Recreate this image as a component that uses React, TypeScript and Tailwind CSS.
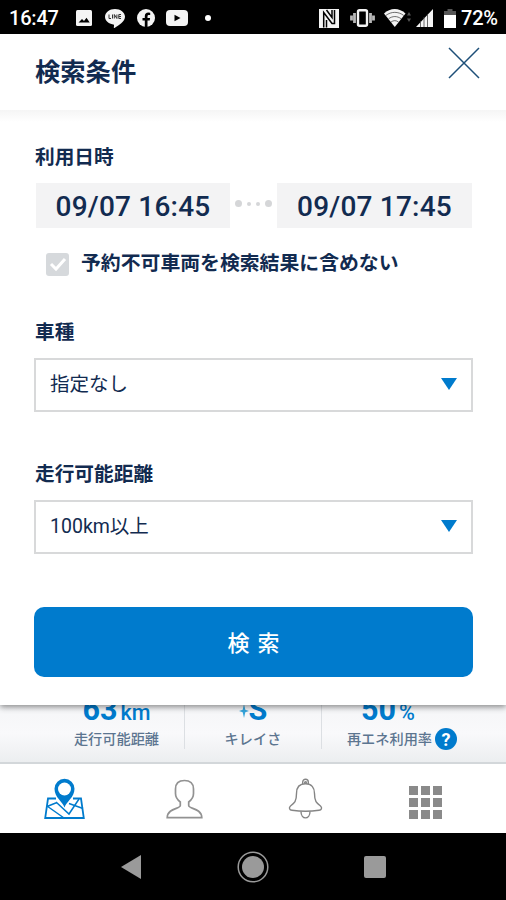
import type { ReactNode } from "react";

const stats = [
  {
    label: "走行可能距離",
    value: "63",
    unit: "km",
    className: "w-[185px] border-r pl-[49px]",
    help: false,
  },
  {
    label: "キレイさ",
    value: "S",
    unit: "",
    className: "w-[137px] border-r",
    help: false,
  },
  {
    label: "再エネ利用率",
    value: "50",
    unit: "%",
    className: "w-[184px] pr-[24px]",
    help: true,
  },
];

function StatusBar() {
  return (
    <div className="flex h-[34px] shrink-0 items-center bg-black pt-0.5 pl-[9px] text-[20px] font-medium text-white">
      <span className="w-[67px] tracking-[-0.2px]">16:47</span>
      <svg className="mr-[13px] h-4 w-4" viewBox="0 0 16 16">
        <rect width="16" height="16" rx="1.5" fill="#f4f4f4" />
        <path d="M2.5 12.5 6 9l2 2 2.5-3.2 3.2 4.7z" fill="#000" />
      </svg>
      <svg className="mr-3 h-[19px] w-5" viewBox="0 0 20 19">
        <path
          d="M10 0C4.500 0 0 3.500 0 7.800c0 3.900 3.500 7 8.200 7.700 1 .2.900.7.600 2.800-.1.700.4.800 1.100.4C13.500 16.700 20 12.500 20 7.800 20 3.500 15.500 0 10 0z"
          fill="#f4f4f4"
        />
        <path
          d="M4 5.500v4h2M7.500 5.500v4M9.300 9.500v-4l2.600 4v-4M16 5.500h-2.200v4H16M13.800 7.500H16"
          fill="none"
          stroke="#333"
        />
      </svg>
      <svg className="mr-[11px] h-[18px] w-[18px]" viewBox="0 0 18 18">
        <circle cx="9" cy="9" r="9" fill="#f4f4f4" />
        <path
          d="M7.800 18v-6.500H5.500V9h2.300V7.200c0-2.400 1.400-3.600 3.500-3.600l1.900.1v2.200h-1.200c-1.200 0-1.500.6-1.500 1.400V9h2.600l-.4 2.500h-2.200V18z"
          fill="#000"
        />
      </svg>
      <svg className="mr-[17px] h-4 w-[22px]" viewBox="0 0 22 16">
        <rect width="22" height="16" rx="4" fill="#f4f4f4" />
        <path d="M8.500 4.800v6.400L14.500 8z" fill="#000" />
      </svg>
      <span className="h-1.5 w-1.5 rounded-full bg-white" />
      <svg className="ml-[108px] h-[19px] w-5" viewBox="0 0 20 19">
        <path d="M0 0h20v19H0z" fill="#f4f4f4" />
        <path
          d="M4.700 18.500V3.500l8.300 11h2.500V1"
          fill="none"
          stroke="#000"
          strokeWidth="1.500"
        />
        <path d="M7.500 18.500V11M13 1v7.500L7.500 1" fill="none" stroke="#000" strokeWidth="1.500" />
      </svg>
      <svg className="ml-[11px] h-[18px] w-[25px]" viewBox="0 0 25 18">
        <rect
          x="8"
          y="1.200"
          width="9"
          height="15.600"
          rx="1.500"
          fill="none"
          stroke="#f4f4f4"
          strokeWidth="2.400"
        />
        <path
          d="M4.500 4v10M20.500 4v10M1.500 6.500v5M23.500 6.500v5"
          stroke="#b8b8b8"
          strokeWidth="2.800"
        />
      </svg>
      <svg className="ml-[9px] h-[18px] w-[28px]" viewBox="0 0 28 18">
        <path d="M0 4.500C6-1.500 15.500-1.500 21.500 4.500L10.800 18z" fill="#f4f4f4" />
        <path
          d="M1.800 6.500c5.500-4.200 12.500-4.200 18 0M4.500 9.800c4-3 8.700-3 12.700 0M7 13c2.500-1.800 5-1.800 7.500 0"
          fill="none"
          stroke="#333"
          strokeWidth=".7"
        />
        <path d="m25 3 2 3.500h-4zM25 13l2-3.500h-4z" fill="#555" />
      </svg>
      <svg className="ml-1 h-[18px] w-[17px]" viewBox="0 0 17 18">
        <path d="M0 18 17 0v18z" fill="#f4f4f4" />
        <path d="M4.500 12v6M8 8v10M11.500 5v13" stroke="#444" strokeWidth=".8" />
      </svg>
      <svg className="ml-[11px] h-[19px] w-3" viewBox="0 0 12 19">
        <path d="M3.500 0h5v2H12v4H0V2h3.500z" fill="#555" />
        <path d="M0 6h12v13H0z" fill="#fff" />
      </svg>
      <span className="ml-[5px] tracking-[-0.2px]">72%</span>
    </div>
  );
}

function Label({ children }: { children: ReactNode }) {
  return (
    <h2 className="h-7 text-[19.700px] leading-7 font-bold">{children}</h2>
  );
}

function Select({ value }: { value: string }) {
  return (
    <button className="-ml-px flex h-[54px] w-[439px] items-center justify-between border-2 border-[#d8d9da] pr-[14px] pl-[14px] text-[19.500px] font-normal">
      <span>{value}</span>
      <svg className="mb-0.5 h-3 w-4" viewBox="0 0 16 12">
        <path d="M0 0h16L8 12z" fill="#007bcd" />
      </svg>
    </button>
  );
}

function DateRange() {
  return (
    <div className="mt-[11px] ml-px flex h-[45px] w-[436px] items-center text-[28px] font-medium">
      <div className="flex h-full w-[194px] items-center justify-center bg-[#f3f3f4] pt-0.5 tracking-[0.2px]">
        09/07 16:45
      </div>
      <div className="flex w-[47px] items-center justify-center gap-[5px] pb-1">
        <span className="h-[7px] w-[7px] rounded-full bg-[#d5d6d8]" />
        <span className="h-1 w-1 rounded-full bg-[#d5d6d8]" />
        <span className="h-1 w-1 rounded-full bg-[#d5d6d8]" />
        <span className="h-[7px] w-[7px] rounded-full bg-[#d5d6d8]" />
      </div>
      <div className="flex h-full w-[195px] items-center justify-center bg-[#f3f3f4] pt-0.5 tracking-[0.2px]">
        09/07 17:45
      </div>
    </div>
  );
}

function Stats() {
  return (
    <div className="flex h-[59px] shrink-0 overflow-hidden border-b-2 border-[#d3d7da] bg-linear-to-b from-[#f5f6f8] via-[#f9f9fb] to-[#eceef0]">
      {stats.map((stat) => (
        <div
          key={stat.label}
          className={`-mt-3 flex h-[56px] flex-col items-center border-[#dcdfe3] text-[#007bcd] ${stat.className}`}
        >
          <div
            className={`flex h-[35px] shrink-0 items-baseline text-[30.500px] leading-[34px] font-bold ${stat.help ? "-ml-7" : ""}`}
          >
            {stat.value === "S" && (
              <svg className="h-3.5 w-2.5 self-center" viewBox="0 0 10 14">
                <path d="m5 0 1.300 5.700L10 7 6.300 8.300 5 14 3.700 8.300 0 7l3.700-1.300z" fill="#35a5dc" />
              </svg>
            )}
            {stat.value}
            {stat.unit && (
              <span className="ml-[3px] text-[21.500px] font-medium">{stat.unit}</span>
            )}
          </div>
          <div className="flex h-6 shrink-0 items-center text-[14.200px] font-medium whitespace-nowrap text-[#5c7590]">
            {stat.label}
            {stat.help && (
              <span className="mb-0.5 ml-[3px] flex h-[22px] w-[22px] items-center justify-center rounded-full bg-[#007bcd] text-[18px] font-bold text-white">
                ?
              </span>
            )}
          </div>
        </div>
      ))}
    </div>
  );
}

function TabBar() {
  return (
    <div className="flex h-[69px] shrink-0 items-center bg-white pl-[44px]">
      <svg className="mr-[81px] h-[42px] w-[41px]" viewBox="0 0 41 42" fill="none" stroke="#007bcd">
        <path d="M12 20.500H4L1.200 40h38.600L37 20.500h-8" strokeWidth="1.800" />
        <path d="m3 28.500 10-4M3 28l17 12M12 24l13 12L35 21M25 25.500l14 5" strokeWidth="1.500" />
        <path
          d="M20.500 29.500c-2-6-10-10-10-18.700a10 10 0 0 1 20 0c0 8.700-8 12.700-10 18.700z"
          fill="#007bcd"
          stroke="none"
        />
        <circle cx="20.500" cy="11" r="6.500" fill="#fff" stroke="none" />
      </svg>
      <svg className="mr-[85px] h-[40px] w-[37px]" viewBox="0 0 37 40" fill="none" stroke="#929292" strokeWidth="1.700">
        <path d="M18.500 1.500c-5.500 0-9 3-9 8.500v4.500c0 4 1.500 6 4.800 8.500v3.500C14.300 30 1.500 29 1.200 38.700h34.600C35.500 29 22.700 30 22.700 26.500V23c3.300-2.500 4.800-4.500 4.800-8.500V10c0-5.500-3.500-8.500-9-8.500z" />
      </svg>
      <svg className="mr-[86px] h-[41px] w-[35px]" viewBox="0 0 35 41" fill="none" stroke="#858585" strokeWidth="1.400">
        <path d="M14.700 6.200V4a2.800 2.800 0 0 1 5.600 0v2.200M16.700 5.800V4.500a.8.800 0 0 1 1.600 0v1.300" />
        <path d="M17.500 5.800C11 5.800 8.500 10 8.500 15.500c0 8-2 9.500-6 12.500-2 1.800-1 4 1.500 4.300 8 1.200 19 1.200 27 0 2.500-.3 3.500-2.500 1.500-4.300-4-3-6-4.500-6-12.500 0-5.500-2.500-9.700-9-9.700z" />
        <path d="M13 33.500c0 8.500 9 8.500 9 0" />
      </svg>
      <div className="mt-[7px] grid grid-cols-3 gap-[3px]">
        {Array.from({ length: 9 }, (_, index) => (
          <span key={index} className="h-[9px] w-[9px] bg-[#8a8a8a]" />
        ))}
      </div>
    </div>
  );
}

export default function App() {
  return (
    <div className="flex h-[900px] w-[506px] flex-col overflow-hidden bg-white font-[Roboto,'Noto_Sans_CJK_JP',sans-serif] text-[#122b50]">
      <StatusBar />
      <div className="z-10 flex h-[671px] shrink-0 flex-col bg-white shadow-[0_2px_6px_rgba(0,0,0,0.45)]">
        <header className="flex h-[76px] shrink-0 items-start justify-between pr-[26px] pl-[35px]">
          <h1 className="mt-[20px] text-[25.300px] leading-[38px] font-bold">
            検索条件
          </h1>
          <svg className="mt-[13px] h-8 w-8" viewBox="0 0 32 32">
            <path d="m1 1 30 30M31 1 1 31" stroke="#1d4f78" strokeWidth="1.500" />
          </svg>
        </header>
        <div className="h-3 shrink-0 bg-linear-to-b from-[#f5f5f5] to-white" />
        <div className="flex flex-col pt-[22px] pl-[35px]">
          <Label>利用日時</Label>
          <DateRange />
          <div className="mt-[22px] flex h-7 items-center pl-[11px]">
            <span className="mr-3 flex h-[23px] w-[23px] items-center justify-center rounded-[3px] bg-[#d6d9dc]">
              <svg className="h-4 w-[18px]" viewBox="0 0 18 16">
                <path d="m2 8 5 5 9-10" fill="none" stroke="#fff" strokeWidth="3" />
              </svg>
            </span>
            <span className="text-[19.850px] font-bold">
              予約不可車両を検索結果に含めない
            </span>
          </div>
          <div className="mt-[41px]">
            <Label>車種</Label>
            <div className="mt-[11px]">
              <Select value="指定なし" />
            </div>
          </div>
          <div className="mt-[49px]">
            <Label>走行可能距離</Label>
            <div className="mt-[11px]">
              <Select value="100km以上" />
            </div>
          </div>
          <button className="mt-[53px] -ml-px flex h-[70px] w-[439px] items-center justify-center gap-[8px] rounded-[10px] bg-[#007bcd] pt-0.5 text-[22px] font-medium text-white">
            <span>検</span>
            <span>索</span>
          </button>
        </div>
      </div>
      <Stats />
      <TabBar />
      <div className="flex h-[67px] shrink-0 items-center bg-black pl-[121px]">
        <svg className="h-6 w-5" viewBox="0 0 20 24">
          <path d="M20 0v24L0 12z" fill="#9a9a9a" />
        </svg>
        <svg className="ml-[96px] h-8 w-8" viewBox="0 0 32 32">
          <circle cx="16" cy="16" r="14.800" fill="none" stroke="#9a9a9a" strokeWidth="1.500" />
          <circle cx="16" cy="16" r="11" fill="#9a9a9a" />
        </svg>
        <span className="ml-[95px] h-[22px] w-[22px] rounded-[2px] bg-[#9a9a9a]" />
      </div>
    </div>
  );
}
